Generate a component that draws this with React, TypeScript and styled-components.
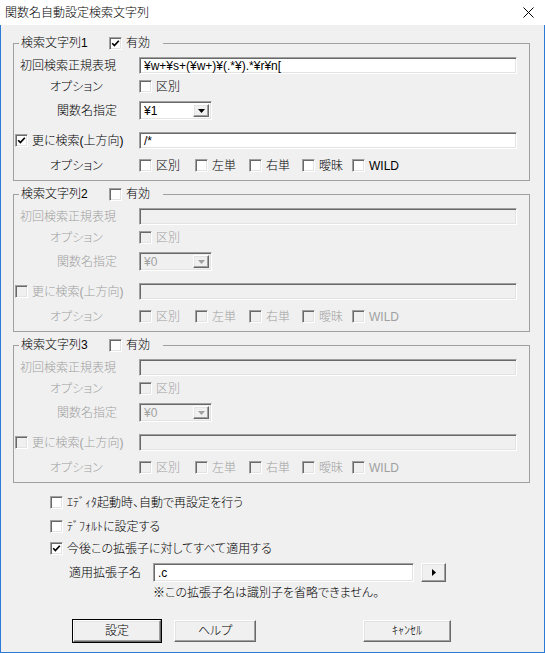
import React from "react";
import styled, { createGlobalStyle, css } from "styled-components";

const FONT = `"Liberation Sans", "Noto Sans CJK JP", sans-serif`;

const GlobalStyle = createGlobalStyle`
  html, body { margin: 0; padding: 0; background: #f0f0f0; }
  body { font-family: ${FONT}; font-size: 12px; }
`;

const Window = styled.div`
  width: 545px;
  height: 653px;
  display: flex;
  flex-direction: column;
  box-sizing: border-box;
  font-family: ${FONT};
  font-size: 12px;
  font-weight: 300;
  font-feature-settings: "palt";
  color: #000;
`;

const TitleBar = styled.div`
  height: 25px;
  flex: none;
  background: #fff;
  display: flex;
  align-items: center;
  justify-content: space-between;
  padding: 0 11px 0 5px;
`;

const TitleText = styled.span`
  font-size: 12px;
  line-height: 14px;
`;

const Body = styled.div`
  flex: 1;
  background: #f0f0f0;
  border: 1px solid #2b7bd6;
  border-top: none;
  padding: 10px 14px 0 12px;
  display: flex;
  flex-direction: column;
`;

const Group = styled.fieldset<{ $first?: boolean }>`
  margin: ${(p) => (p.$first ? 0 : 5)}px 0 0 0;
  padding: 6px 12px 8px 0;
  border: 1px solid #a0a0a0;
  min-width: 0;
  display: flex;
  flex-direction: column;
`;

const Legend = styled.legend`
  margin-left: 5px;
  padding: 0 13px 0 2px;
  height: 16px;
  display: flex;
  align-items: center;
`;

const LegendText = styled.span`
  width: 88px;
  line-height: 14px;
  white-space: nowrap;
`;

const Row = styled.div<{ $mt: number; $h: number }>`
  display: flex;
  align-items: center;
  height: ${(p) => p.$h}px;
  margin-top: ${(p) => p.$mt}px;
`;

const dis = css<{ $disabled?: boolean }>`
  color: ${(p) => (p.$disabled ? "#a0a0a0" : "#000")};
`;

const Label = styled.div<{ $indent: number; $disabled?: boolean; $w?: number }>`
  width: ${(p) => p.$w ?? 125}px;
  flex: none;
  box-sizing: border-box;
  padding-left: ${(p) => p.$indent}px;
  line-height: 14px;
  white-space: nowrap;
  display: flex;
  align-items: center;
  ${dis}
`;

const sunken = css`
  box-sizing: border-box;
  border: 1px solid;
  border-color: #a0a0a0 #ffffff #ffffff #a0a0a0;
  box-shadow: inset 1px 1px 0 #696969, inset -1px -1px 0 #e3e3e3;
`;

const raised = css`
  box-sizing: border-box;
  border: 1px solid;
  border-color: #ffffff #696969 #696969 #ffffff;
  box-shadow: inset -1px -1px 0 #a0a0a0, inset 1px 1px 0 #e3e3e3;
  background: #f0f0f0;
`;

const Edit = styled.div<{ $disabled?: boolean; $w?: number }>`
  ${sunken}
  ${(p) => (p.$w ? `width: ${p.$w}px; flex: none;` : "flex: 1;")}
  height: 100%;
  background: ${(p) => (p.$disabled ? "#f0f0f0" : "#fff")};
  padding-left: 4px;
  display: flex;
  align-items: center;
  line-height: 14px;
  white-space: nowrap;
  overflow: hidden;
`;

const Combo = styled.div<{ $disabled?: boolean }>`
  ${sunken}
  width: 73px;
  height: 100%;
  background: ${(p) => (p.$disabled ? "#f0f0f0" : "#fff")};
  padding: 2px 2px 2px 4px;
  display: flex;
  align-items: center;
  justify-content: space-between;
  ${dis}
`;

const ComboText = styled.span`
  line-height: 14px;
`;

const DropButton = styled.div`
  ${raised}
  width: 16px;
  height: 100%;
  display: flex;
  align-items: center;
  justify-content: center;
`;

const BoxEl = styled.span<{ $disabled?: boolean }>`
  ${sunken}
  width: 13px;
  height: 13px;
  flex: none;
  background: ${(p) => (p.$disabled ? "#f0f0f0" : "#fff")};
  display: inline-flex;
  align-items: center;
  justify-content: center;
`;

const CheckItem = styled.span<{ $disabled?: boolean }>`
  display: inline-flex;
  align-items: center;
  gap: 4px;
  line-height: 14px;
  white-space: nowrap;
  ${dis}
`;

const OptionGrid = styled.div`
  display: grid;
  grid-template-columns: 56px 54px 53px 50px auto;
  align-items: center;
`;

const Tick = () => (
  <svg width="9" height="9" viewBox="0 0 9 9">
    <path d="M1.2 4.2 L3.4 6.6 L7.8 1.8" fill="none" stroke="#000" strokeWidth="1.7" />
  </svg>
);

const Check = ({ checked, disabled }: { checked?: boolean; disabled?: boolean }) => (
  <BoxEl $disabled={disabled}>{checked && <Tick />}</BoxEl>
);

const CheckLabel = ({
  text,
  checked,
  disabled,
}: {
  text: string;
  checked?: boolean;
  disabled?: boolean;
}) => (
  <CheckItem $disabled={disabled}>
    <Check checked={checked} disabled={disabled} />
    {text}
  </CheckItem>
);

type GroupProps = {
  index: number;
  active: boolean;
  regex: string;
  func: string;
  more: string;
  moreChecked: boolean;
};

const SearchGroup = ({ index, active, regex, func, more, moreChecked }: GroupProps) => {
  const d = !active;
  return (
    <Group $first={index === 1}>
      <Legend>
        <LegendText>検索文字列{index}</LegendText>
        <CheckLabel text="有効" checked={active} />
      </Legend>
      <Row $mt={0} $h={17}>
        <Label $indent={6} $disabled={d}>初回検索正規表現</Label>
        <Edit $disabled={d}>{regex}</Edit>
      </Row>
      <Row $mt={6} $h={13}>
        <Label $indent={36} $disabled={d}>オプション</Label>
        <CheckLabel text="区別" disabled={d} />
      </Row>
      <Row $mt={8} $h={19}>
        <Label $indent={43} $disabled={d}>関数名指定</Label>
        <Combo $disabled={d}>
          <ComboText>{func}</ComboText>
          <DropButton>
            <svg width="7" height="4" viewBox="0 0 7 4">
              <path d="M0 0 H7 L3.5 4 Z" fill={d ? "#a0a0a0" : "#000"} />
            </svg>
          </DropButton>
        </Combo>
      </Row>
      <Row $mt={12} $h={17}>
        <Label $indent={1} $disabled={d}>
          <CheckLabel text="更に検索(上方向)" checked={moreChecked} disabled={d} />
        </Label>
        <Edit $disabled={d}>{more}</Edit>
      </Row>
      <Row $mt={10} $h={13}>
        <Label $indent={36} $disabled={d}>オプション</Label>
        <OptionGrid>
          <CheckLabel text="区別" disabled={d} />
          <CheckLabel text="左単" disabled={d} />
          <CheckLabel text="右単" disabled={d} />
          <CheckLabel text="曖昧" disabled={d} />
          <CheckLabel text="WILD" disabled={d} />
        </OptionGrid>
      </Row>
    </Group>
  );
};

const BottomRow = styled.div<{ $mt: number; $h: number; $indent: number }>`
  display: flex;
  align-items: center;
  height: ${(p) => p.$h}px;
  margin-top: ${(p) => p.$mt}px;
  padding-left: ${(p) => p.$indent}px;
`;

const Note = styled.div`
  margin-top: 4px;
  padding-left: 140px;
  line-height: 14px;
  white-space: nowrap;
`;

const ArrowButton = styled.div`
  ${raised}
  width: 25px;
  height: 19px;
  margin-left: 7px;
  display: flex;
  align-items: center;
  justify-content: center;
`;

const ButtonRow = styled.div`
  display: flex;
  margin-top: 20px;
  padding-left: 60px;
`;

const Button = styled.div<{ $w: number; $default?: boolean; $ml?: number }>`
  ${raised}
  width: ${(p) => p.$w}px;
  height: 22px;
  margin-left: ${(p) => p.$ml ?? 0}px;
  display: flex;
  align-items: center;
  justify-content: center;
  line-height: 14px;
  ${(p) =>
    p.$default &&
    css`
      outline: 1px solid #000;
      outline-offset: 0;
    `}
`;

export default function App() {
  return (
    <>
      <GlobalStyle />
      <Window>
        <TitleBar>
          <TitleText>関数名自動設定検索文字列</TitleText>
          <svg width="11" height="11" viewBox="0 0 11 11">
            <path d="M0.5 0.5 L10.5 10.5 M10.5 0.5 L0.5 10.5" stroke="#000" strokeWidth="1" />
          </svg>
        </TitleBar>
        <Body>
          <SearchGroup
            index={1}
            active
            regex="¥w+¥s+(¥w+)¥(.*¥).*¥r¥n["
            func="¥1"
            more="/*"
            moreChecked
          />
          <SearchGroup index={2} active={false} regex="" func="¥0" more="" moreChecked={false} />
          <SearchGroup index={3} active={false} regex="" func="¥0" more="" moreChecked={false} />

          <BottomRow $mt={13} $h={13} $indent={37}>
            <CheckLabel text="ｴﾃﾞｨﾀ起動時、自動で再設定を行う" />
          </BottomRow>
          <BottomRow $mt={11} $h={13} $indent={37}>
            <CheckLabel text="ﾃﾞﾌｫﾙﾄに設定する" />
          </BottomRow>
          <BottomRow $mt={9} $h={13} $indent={37}>
            <CheckLabel text="今後この拡張子に対してすべて適用する" checked />
          </BottomRow>
          <BottomRow $mt={8} $h={19} $indent={56}>
            <Label $indent={0} $w={84}>適用拡張子名</Label>
            <Edit $w={261}>.c</Edit>
            <ArrowButton>
              <svg width="4" height="7" viewBox="0 0 4 7">
                <path d="M0 0 L4 3.5 L0 7 Z" fill="#000" />
              </svg>
            </ArrowButton>
          </BottomRow>
          <Note>※この拡張子名は識別子を省略できません。</Note>
          <ButtonRow>
            <Button $w={88} $default>設定</Button>
            <Button $w={82} $ml={13}>ヘルプ</Button>
            <Button $w={88} $ml={107}>ｷｬﾝｾﾙ</Button>
          </ButtonRow>
        </Body>
      </Window>
    </>
  );
}
